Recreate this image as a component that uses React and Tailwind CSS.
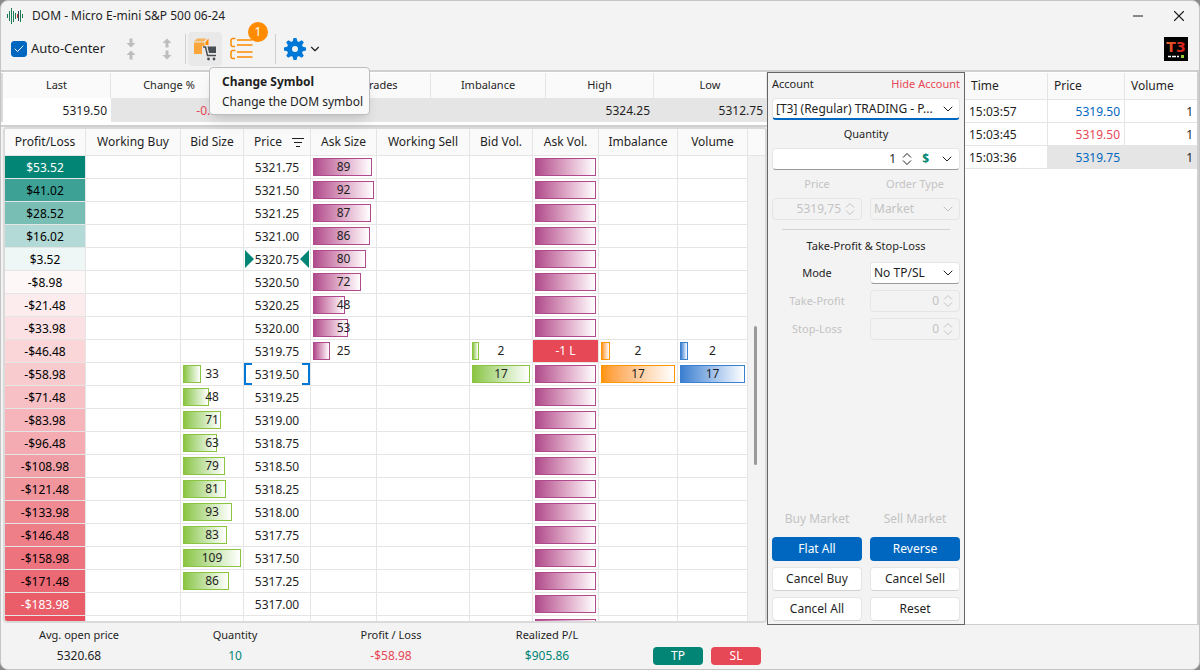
import clsx from 'clsx';
import { Check, ChevronDown, Minus, X } from 'lucide-react';

const STATS = [
    { name: 'Last', width: 'w-[108px]', value: '5319.50' },
    { name: 'Change %', width: 'w-[117px]', value: '-0.04', tone: 'text-[#e74856]' },
    { name: '', width: 'w-[103px]', value: '' },
    { name: 'Trades', width: 'w-[100px]', value: '' },
    { name: 'Imbalance', width: 'w-[115px]', value: '' },
    { name: 'High', width: 'w-[108px]', value: '5324.25' },
    { name: 'Low', width: 'w-[113px]', value: '5312.75' },
];

const COLUMNS = [
    { name: 'Profit/Loss', width: 'w-[81px]' },
    { name: 'Working Buy', width: 'w-[95px]' },
    { name: 'Bid Size', width: 'w-[63px]' },
    { name: 'Price', width: 'w-[67px]' },
    { name: 'Ask Size', width: 'w-[66px]' },
    { name: 'Working Sell', width: 'w-[93px]' },
    { name: 'Bid Vol.', width: 'w-[63px]' },
    { name: 'Ask Vol.', width: 'w-[66px]' },
    { name: 'Imbalance', width: 'w-[79px]' },
    { name: 'Volume', width: 'w-[70px]' },
];

const BAR_STYLES = {
    purple: 'border-[#b04a8c] from-[#b04a8c]',
    green: 'border-[#8bc540] from-[#8bc540]',
    orange: 'border-[#ff9500] from-[#ff9500]',
    blue: 'border-[#3a7fd0] from-[#3a7fd0]',
};

const ASK_SIZES = [89, 92, 87, 86, 80, 72, 48, 53, 25];
const BID_SIZES = [33, 48, 71, 63, 79, 81, 93, 83, 109, 86];
const VOLUMES = { 8: 2, 9: 17 };

const ROWS = Array.from({ length: 20 }, (_, i) => ({
    pl: 53.52 - i * 12.5,
    price: (5321.75 - i * 0.25).toFixed(2),
    ask: ASK_SIZES[i],
    bid: BID_SIZES[i - 9],
    volume: VOLUMES[i],
    average: i === 4,
    last: i === 9,
    position: i === 8,
}));

const TRADES = [
    { time: '15:03:57', price: '5319.50', volume: 1, tone: 'text-[#0067c0]' },
    { time: '15:03:45', price: '5319.50', volume: 1, tone: 'text-[#e74856]' },
    { time: '15:03:36', price: '5319.75', volume: 1, tone: 'text-[#0067c0]', shaded: true },
];

const SUMMARY = [
    { name: 'Avg. open price', value: '5320.68', tone: 'text-[#1f1f1f]' },
    { name: 'Quantity', value: '10', tone: 'text-[#028575]' },
    { name: 'Profit / Loss', value: '-$58.98', tone: 'text-[#e74856]' },
    { name: 'Realized P/L', value: '$905.86', tone: 'text-[#028575]' },
];

const GREEN = [2, 133, 117];
const RED = [231, 72, 86];

function plColor(pl) {
    const target = pl > 0 ? GREEN : RED;
    const t = Math.min(1, Math.abs(pl) / (pl > 0 ? 53.52 : 209));
    return `rgb(${target.map((c) => Math.round(255 - (255 - c) * t)).join(',')})`;
}

function formatPl(pl) {
    return `${pl < 0 ? '-' : ''}$${Math.abs(pl).toFixed(2)}`;
}

function Bar({ value, max, color, label = true }) {
    return (
        <div className="relative flex h-[22px] items-center justify-center">
            <div className="absolute inset-0.5">
                <div
                    className={clsx('h-full border bg-linear-to-r to-white', BAR_STYLES[color])}
                    style={{ width: `${(value / max) * 100}%` }}
                />
            </div>
            {label && <span className="relative">{value}</span>}
        </div>
    );
}

function TitleBar() {
    return (
        <header className="flex h-[29px] items-center pr-[11px] pl-1.5">
            <svg className="h-4 w-4 shrink-0" viewBox="0 0 16 16" fill="none">
                <path d="M.5 6v4M2.500 3v10M4.500 0v16M6.500 3v11M8.500 5v6M13.500 2v12M15.500 6v4" stroke="#1c7a54" />
                <path d="M10.500 6v4" stroke="#c0392b" />
                <path d="M11.500 3v10" stroke="#33475b" />
            </svg>
            <h1 className="ml-[9px] flex-1 pt-px text-[12px]">DOM - Micro E-mini S&amp;P 500 06-24</h1>
            <button type="button" aria-label="Minimize" className="mr-6">
                <Minus className="h-4 w-4" strokeWidth={1.5} />
            </button>
            <button type="button" aria-label="Close">
                <X className="h-[18px] w-[18px]" strokeWidth={1.5} />
            </button>
        </header>
    );
}

function ArrowPair({ outward }) {
    return (
        <svg className="h-6 w-3" viewBox="0 0 12 24" fill="#bdbdbd">
            {outward ? (
                <path d="M6 1.5l4.5 4.5h-3v4.5h-3V6h-3zM6 22.5l4.5-4.5h-3v-4.5h-3V18h-3z" />
            ) : (
                <path d="M6 10.5l4.5-4.5h-3V1.5h-3V6h-3zM6 13.5l4.5 4.5h-3v4.5h-3V18h-3z" />
            )}
        </svg>
    );
}

function Toolbar() {
    return (
        <div className="flex h-10 items-center pr-[11px] pb-0.5 pl-2.5">
            <label className="flex w-[110px] items-center gap-1 text-[13px]">
                <span className="relative h-4 w-4">
                    <input
                        type="checkbox"
                        defaultChecked
                        className="peer block h-4 w-4 appearance-none rounded-[3px] border border-[#0067c0] checked:bg-[#0067c0]"
                    />
                    <Check className="pointer-events-none absolute inset-0.5 h-3 w-3 text-white" strokeWidth={2} />
                </span>
                Auto-Center
            </label>
            <button type="button" aria-label="Center once" className="ml-1">
                <ArrowPair />
            </button>
            <button type="button" aria-label="Expand" className="ml-6">
                <ArrowPair outward />
            </button>
            <div className="mx-0.5 ml-3 h-[30px] w-px bg-[#cfcfcf]" />
            <div className="relative">
                <button
                    type="button"
                    aria-label="Change Symbol"
                    aria-describedby="symbol-tip"
                    className="flex h-[34px] w-[34px] items-center justify-center rounded bg-[#e9e9e9]"
                >
                    <svg className="h-6 w-6" viewBox="0 0 24 24" fill="none">
                        <path d="M1 4.500L4 1.500h9.500L11 4.500z" fill="#f7b45c" />
                        <path d="M1 5.500h10.500V9H9v8H1z" fill="#fba53a" />
                        <path d="M12.500 5l3-3.500V8h-3z" fill="#ff8c00" />
                        <path d="M10 10h2.500l2 8.500H23" stroke="#4a4f54" strokeWidth="1.5" />
                        <path d="M14.500 9.500H23V16h-7z" fill="#4a4f54" />
                        <circle cx="15.500" cy="22" r="1.400" fill="#4a4f54" />
                        <circle cx="21" cy="22" r="1.400" fill="#4a4f54" />
                    </svg>
                </button>
                <div
                    id="symbol-tip"
                    role="tooltip"
                    className="absolute top-[35px] left-[21px] z-20 flex w-[161px] flex-col gap-1 rounded border border-[#bdbdbd] bg-[#f9f9f9] px-3 pt-1.5 pb-1 whitespace-nowrap shadow-lg"
                >
                    <strong className="text-[12px] leading-4">Change Symbol</strong>
                    <span className="text-[12px] leading-4">Change the DOM symbol</span>
                </div>
            </div>
            <div className="relative ml-2">
                <button type="button" aria-label="Orders" className="block">
                    <svg className="h-6 w-6" viewBox="0 0 24 24" fill="none" stroke="#ff8c00" strokeWidth="1.5">
                        <path d="M5.500 1.500H3A2 2 0 0 0 1 3.500v4a2 2 0 0 0 2 2h2" />
                        <path d="M5.500 13.500H3a2 2 0 0 0-2 2v4a2 2 0 0 0 2 2h2" />
                        <path d="M7 3h15.500M7 8h15.500M7 15h15.500M7 20h15.500" />
                    </svg>
                </button>
                <span className="absolute -top-[15px] left-[18px] flex h-5 w-5 items-center justify-center rounded-full bg-[#ff8c00] text-[12px] text-white">
                    1
                </span>
            </div>
            <div className="ml-[21px] h-[30px] w-px bg-[#cfcfcf]" />
            <button type="button" aria-label="Settings" className="ml-2 flex items-center gap-0.5">
                <svg className="h-[22px] w-[22px]" viewBox="0 0 22 22" fill="#0078d7">
                    {[0, 45, 90, 135].map((angle) => (
                        <path key={angle} d="M9.500 0h3l1 4v14l-1 4h-3l-1-4V4z" transform={`rotate(${angle} 11 11)`} />
                    ))}
                    <circle cx="11" cy="11" r="8" />
                    <circle cx="11" cy="11" r="3" fill="#f3f3f3" />
                </svg>
                <ChevronDown className="h-3.5 w-3.5" strokeWidth={2} />
            </button>
            <div className="flex-1" />
            <svg className="h-6 w-6" viewBox="0 0 24 24">
                <defs>
                    <linearGradient id="brand" x1="0" x2="1">
                        <stop offset="0" stopColor="#e8622c" />
                        <stop offset="1" stopColor="#d4161c" />
                    </linearGradient>
                </defs>
                <rect width="24" height="24" />
                <text
                    x="12"
                    y="15"
                    textAnchor="middle"
                    fontSize="14"
                    fontWeight="bold"
                    fontFamily="DejaVu Sans"
                    fill="url(#brand)"
                >
                    T3
                </text>
                <path d="M4 19.500h3M8 19.500h4M13 19.500h2" stroke="#fff" strokeWidth="1.5" />
                <rect x="17" y="18" width="3" height="3" fill="#9acd32" />
            </svg>
        </div>
    );
}

function StatsTable() {
    return (
        <div className="border-b-2 border-[#cfcfcf] bg-white pt-px pb-[3px]">
            <table className="w-full table-fixed border-separate border-spacing-0 border-l-2 border-[#dadada]">
                <thead>
                    <tr className="h-[25px] bg-[#fafafa] text-[11px]">
                        {STATS.map((s, i) => (
                            <th key={i} className={clsx('border-r border-[#e5e5e5] p-0 font-normal', s.width)}>
                                {s.name}
                            </th>
                        ))}
                    </tr>
                </thead>
                <tbody>
                    <tr className="h-6">
                        {STATS.map((s, i) => (
                            <td
                                key={i}
                                className={clsx(
                                    'pt-0.5 pr-1 pb-0 text-right',
                                    i === 0 ? 'bg-white' : 'bg-[#e5e5e5]',
                                    s.tone
                                )}
                            >
                                {s.value}
                            </td>
                        ))}
                    </tr>
                </tbody>
            </table>
        </div>
    );
}

function PriceCell({ row }) {
    return (
        <div
            className={clsx(
                'relative flex h-[22px] items-center justify-center pt-px',
                row.last && 'border-x-2 border-[#0078d7]'
            )}
        >
            {row.average && (
                <svg className="absolute inset-0 h-full w-full" viewBox="0 0 66 22" fill="#028575">
                    <path d="M1 2l9 9-9 9zM65 2l-9 9 9 9z" />
                </svg>
            )}
            {row.last && (
                <>
                    <span className="absolute inset-y-0 left-0 w-1.5 border-y-2 border-[#0078d7]" />
                    <span className="absolute inset-y-0 right-0 w-1.5 border-y-2 border-[#0078d7]" />
                </>
            )}
            <span className="relative">{row.price}</span>
        </div>
    );
}

function Ladder() {
    return (
        <div className="mb-0.5 ml-0.5 flex min-h-0 flex-1 overflow-hidden rounded-sm border-2 border-[#dadada] bg-white">
            <div className="min-w-0 flex-1 overflow-hidden">
                <table className="w-full table-fixed border-separate border-spacing-0 text-center">
                    <thead>
                        <tr className="h-[27px] bg-[#fafafa]">
                            {COLUMNS.map((c) => (
                                <th
                                    key={c.name}
                                    className={clsx('border-r border-b border-[#e5e5e5] p-0 font-normal', c.width)}
                                >
                                    {c.name === 'Price' ? (
                                        <span className="flex items-center justify-center gap-2.5 pl-1">
                                            Price
                                            <svg className="h-2.5 w-3" viewBox="0 0 12 10" stroke="#1f1f1f">
                                                <path d="M0 1.500h12M2 5.500h8M4 9.500h4" />
                                            </svg>
                                        </span>
                                    ) : (
                                        c.name
                                    )}
                                </th>
                            ))}
                        </tr>
                    </thead>
                    <tbody>
                        {ROWS.map((row, i) => (
                            <tr key={row.price} className="h-[23px] *:border-r *:border-b *:border-[#e5e5e5] *:p-0">
                                <td
                                    className={i === 0 || i > 18 ? 'text-white' : 'text-black'}
                                    style={{ backgroundColor: plColor(row.pl) }}
                                >
                                    <div className="pt-px">{formatPl(row.pl)}</div>
                                </td>
                                <td />
                                <td>{row.bid && <Bar value={row.bid} max={109} color="green" />}</td>
                                <td>
                                    <PriceCell row={row} />
                                </td>
                                <td>{row.ask && <Bar value={row.ask} max={92} color="purple" />}</td>
                                <td />
                                <td>{row.volume && <Bar value={row.volume} max={17} color="green" />}</td>
                                <td className={clsx(row.position && 'bg-[#e74856] text-white')}>
                                    {row.position ? '-1 L' : <Bar value={1} max={1} color="purple" label={false} />}
                                </td>
                                <td>{row.volume && <Bar value={row.volume} max={17} color="orange" />}</td>
                                <td>{row.volume && <Bar value={row.volume} max={17} color="blue" />}</td>
                            </tr>
                        ))}
                        {/* next row, still scrolled out of view */}
                        <tr className="h-[23px] *:border-r *:border-[#e5e5e5] *:p-0">
                            {COLUMNS.map((c, i) => (
                                <td key={c.name} className={clsx(i === 0 && 'bg-[#e94f5e]')}>
                                    {c.name === 'Ask Vol.' && <Bar value={1} max={1} color="purple" label={false} />}
                                </td>
                            ))}
                        </tr>
                    </tbody>
                </table>
            </div>
            <div className="w-[17px] shrink-0 bg-[#f3f3f3]">
                <div className="h-[27px] border-b border-[#e5e5e5] bg-[#fafafa]" />
                <div className="mt-[170px] ml-1.5 h-[139px] w-[3px] rounded-full bg-[#9a9a9a]" />
            </div>
        </div>
    );
}

function Spinner() {
    return (
        <span className="flex flex-col gap-0.5">
            <button type="button" aria-label="Increase">
                <svg className="h-1.5 w-2.5" viewBox="0 0 10 6" fill="none" stroke="currentColor">
                    <path d="M1 5.500l4-4 4 4" />
                </svg>
            </button>
            <button type="button" aria-label="Decrease">
                <svg className="h-1.5 w-2.5" viewBox="0 0 10 6" fill="none" stroke="currentColor">
                    <path d="M1 .5l4 4 4-4" />
                </svg>
            </button>
        </span>
    );
}

function NumberBox({ id, value, disabled }) {
    return (
        <div className="flex h-[22px] items-center gap-1 rounded border border-[#e5e5e5] pr-1.5 text-[#c3c3c3] *:[span]:*:h-1.5">
            <input
                id={id}
                defaultValue={value}
                disabled={disabled}
                className="w-full min-w-0 flex-1 bg-transparent text-right outline-none"
            />
            <Spinner />
        </div>
    );
}

function SelectBox({ id, value, disabled, accent }) {
    return (
        <div className="relative">
            <select
                id={id}
                disabled={disabled}
                className={clsx(
                    'block h-[22px] w-full appearance-none rounded border border-[#e5e5e5] pr-5 pl-[3px] outline-none',
                    disabled ? 'text-[#c3c3c3] opacity-100' : 'bg-white',
                    accent && 'border-b-2 border-b-[#0067c0]',
                    !accent && !disabled && 'border-b-[#9a9a9a]'
                )}
            >
                <option>{value}</option>
            </select>
            <ChevronDown
                className={clsx(
                    'pointer-events-none absolute top-[3px] right-1 h-4 w-4',
                    disabled && 'text-[#c3c3c3]'
                )}
                strokeWidth={1.5}
            />
        </div>
    );
}

function AccountPanel() {
    return (
        <section className="flex w-[198px] shrink-0 flex-col border border-[#666666] px-1 pb-[3px]">
            <div className="flex h-[25px] items-center justify-between pb-0.5 text-[11px]">
                <label htmlFor="account">Account</label>
                <button type="button" className="text-[#e74856]">
                    Hide Account
                </button>
            </div>
            <SelectBox id="account" value="[T3] (Regular) TRADING - P..." accent />
            <label htmlFor="quantity" className="flex h-7 items-center justify-center text-[11px]">
                Quantity
            </label>
            <div className="flex h-[22px] items-center rounded border border-[#e5e5e5] border-b-[#9a9a9a] bg-white pr-1">
                <input
                    id="quantity"
                    defaultValue="1"
                    className="mr-1.5 w-full min-w-0 flex-1 bg-transparent text-right outline-none"
                />
                <Spinner />
                <button type="button" aria-label="Currency" className="mx-2.5 font-bold text-[#028575]">
                    $
                </button>
                <button type="button" aria-label="Quantity presets">
                    <ChevronDown className="h-4 w-4" strokeWidth={1.5} />
                </button>
            </div>
            <div className="grid grid-cols-2 gap-x-2">
                <label htmlFor="price" className="flex h-7 items-center justify-center text-[11px] text-[#c3c3c3]">
                    Price
                </label>
                <label htmlFor="type" className="flex h-7 items-center justify-center text-[11px] text-[#c3c3c3]">
                    Order Type
                </label>
                <NumberBox id="price" value="5319,75" disabled />
                <SelectBox id="type" value="Market" disabled />
            </div>
            <hr className="mx-2.5 mt-[9px] border-[#d2d2d2]" />
            <h2 className="flex h-8 items-center justify-center text-[11px]">Take-Profit &amp; Stop-Loss</h2>
            <div className="grid grid-cols-2 items-center gap-x-2 gap-y-1.5">
                <label htmlFor="mode" className="text-center text-[11px]">
                    Mode
                </label>
                <SelectBox id="mode" value="No TP/SL" />
                <label htmlFor="tp" className="text-center text-[11px] text-[#c3c3c3]">
                    Take-Profit
                </label>
                <NumberBox id="tp" value="0" disabled />
                <label htmlFor="sl" className="text-center text-[11px] text-[#c3c3c3]">
                    Stop-Loss
                </label>
                <NumberBox id="sl" value="0" disabled />
            </div>
            <div className="flex-1" />
            <div className="grid grid-cols-2 gap-x-2 gap-y-1.5 *:h-6 *:rounded">
                <button type="button" disabled className="text-[#c3c3c3]">
                    Buy Market
                </button>
                <button type="button" disabled className="text-[#c3c3c3]">
                    Sell Market
                </button>
                <button type="button" className="bg-[#0067c0] text-white">
                    Flat All
                </button>
                <button type="button" className="bg-[#0067c0] text-white">
                    Reverse
                </button>
                {['Cancel Buy', 'Cancel Sell', 'Cancel All', 'Reset'].map((name) => (
                    <button key={name} type="button" className="border border-[#e5e5e5] border-b-[#d2d2d2] bg-white">
                        {name}
                    </button>
                ))}
            </div>
        </section>
    );
}

function TradesTable() {
    return (
        <div className="w-[234px] shrink-0 border-r-2 border-b border-[#cfcfcf] bg-white pt-px">
            <table className="w-full table-fixed border-separate border-spacing-0">
                <thead>
                    <tr className="h-[27px] bg-[#fafafa] text-left *:border-b *:border-[#e5e5e5] *:py-0 *:pr-0 *:pl-1.5 *:font-normal">
                        <th className="w-[83px] border-r">Time</th>
                        <th className="w-[77px] border-r">Price</th>
                        <th>Volume</th>
                    </tr>
                </thead>
                <tbody>
                    {TRADES.map((t) => (
                        <tr key={t.time} className="h-[23px] *:border-b *:border-[#e5e5e5] *:px-1 *:pt-px *:pb-0">
                            <td className="border-r">{t.time}</td>
                            <td className={clsx('border-r text-right', t.tone, t.shaded && 'bg-[#e5e5e5]')}>
                                {t.price}
                            </td>
                            <td className={clsx('text-right', t.shaded && 'bg-[#e5e5e5]')}>{t.volume}</td>
                        </tr>
                    ))}
                </tbody>
            </table>
        </div>
    );
}

function Footer() {
    return (
        <footer className="flex h-11 items-start">
            {SUMMARY.map((s) => (
                <div key={s.name} className="flex w-39 flex-col text-center">
                    <span className="text-[11px] leading-5">{s.name}</span>
                    <span className={clsx('leading-[22px]', s.tone)}>{s.value}</span>
                </div>
            ))}
            <div className="mt-[22px] ml-7 flex gap-2 text-white">
                <button type="button" className="h-[18px] w-[50px] rounded bg-[#028575] leading-[18px]">
                    TP
                </button>
                <button type="button" className="h-[18px] w-[50px] rounded bg-[#e74856] leading-[18px]">
                    SL
                </button>
            </div>
        </footer>
    );
}

export default function App() {
    return (
        <div className="h-screen bg-[#8a8a8a] font-['Noto_Sans',sans-serif] text-[12px] text-[#1f1f1f]">
            <div className="flex h-full flex-col overflow-hidden rounded-lg border border-[#c4c4c4] bg-[#f3f3f3]">
                <TitleBar />
                <Toolbar />
                <main className="flex min-h-0 flex-1 border-t-2 border-[#cfcfcf]">
                    <div className="flex min-w-0 flex-1 flex-col">
                        <StatsTable />
                        <Ladder />
                    </div>
                    <AccountPanel />
                    <TradesTable />
                </main>
                <Footer />
            </div>
        </div>
    );
}
